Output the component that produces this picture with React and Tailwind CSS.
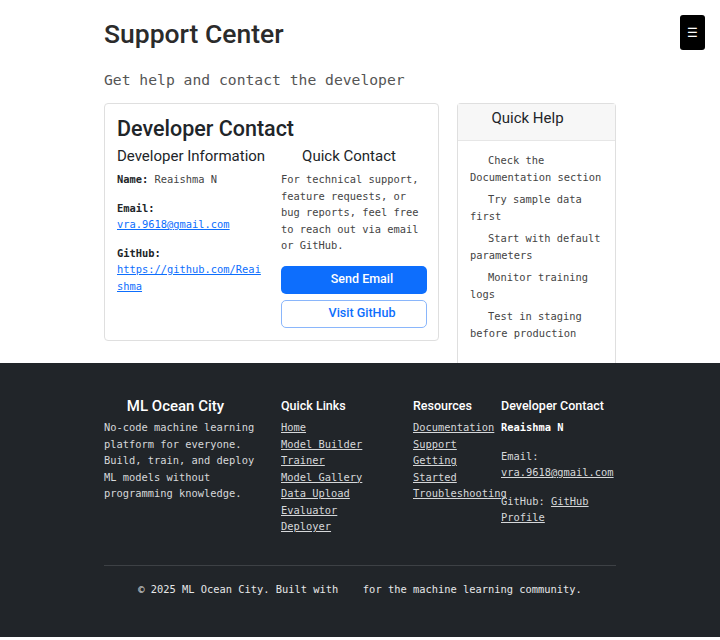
const mono = { fontFamily: '"DejaVu Sans Mono", "Liberation Mono", monospace' };
const sans = { fontFamily: 'Roboto, "Noto Sans", Arial, sans-serif' };

const quickHelp = [
  'Check the Documentation section',
  'Try sample data first',
  'Start with default parameters',
  'Monitor training logs',
  'Test in staging before production',
];

const quickLinks = ['Home', 'Model Builder', 'Trainer', 'Model Gallery', 'Data Upload', 'Evaluator', 'Deployer'];
const resources = ['Documentation', 'Support', 'Getting Started', 'Troubleshooting'];

function FooterHeading({ children }) {
  return (
    <h5 className="mb-[4px] text-[12.5px] font-medium leading-[18px] text-white" style={sans}>
      {children}
    </h5>
  );
}

export default function App() {
  return (
    <div className="min-h-[640px] bg-white text-[#212529]">
      <button className="fixed right-[15px] top-[15px] flex h-[35px] w-[25px] items-center justify-center rounded-[3px] bg-black text-[12px] text-white">
        ☰
      </button>

      <main className="mx-auto w-[512px] pt-[17px]">
        <h1 className="text-[26.5px] font-medium leading-[34px] text-[#2b2b2b]" style={sans}>Support Center</h1>
        <p className="mt-[20px] text-[14.7px] leading-[18px] text-[#555]" style={mono}>
          Get help and contact the developer
        </p>

        <div className="mt-[14px] flex items-start gap-[18px]">
          <section className="w-[335px] rounded-[4px] border border-[#dfdfdf] px-[12px] py-[12px]">
            <h2 className="text-[21.5px] font-medium leading-[26px] text-[#212529]" style={sans}>Developer Contact</h2>
            <div className="mt-[5px] grid grid-cols-[152px_146px] gap-[12px]">
              <div>
                <h3 className="mb-[6px] text-[15px] leading-[18px]" style={sans}>Developer Information</h3>
                <div className="text-[10.4px] leading-[16.5px] text-[#444]" style={mono}>
                  <p><strong className="text-[#212529]">Name:</strong> Reaishma N</p>
                  <p className="mt-[12px]"><strong className="text-[#212529]">Email:</strong></p>
                  <a className="text-[#0d6efd] underline">vra.9618@gmail.com</a>
                  <p className="mt-[12px]"><strong className="text-[#212529]">GitHub:</strong></p>
                  <a className="block w-[146px] break-all text-[#0d6efd] underline">https://github.com/Reaishma</a>
                </div>
              </div>
              <div>
                <h3 className="mb-[6px] pr-[10px] text-center text-[15px] leading-[18px]" style={sans}>Quick Contact</h3>
                <p className="text-[10.4px] leading-[16.5px] text-[#444]" style={mono}>
                  For technical support, feature requests, or bug reports, feel free to reach out via email or GitHub.
                </p>
                <div className="mt-[12px] flex flex-col gap-[6px]" style={sans}>
                  <button className="flex h-[28px] items-center justify-center rounded-[5px] bg-[#0d6efd] text-[12.5px] font-medium text-white">
                    <span className="inline-block w-[16px]" />Send Email
                  </button>
                  <button className="flex h-[28px] items-center justify-center rounded-[5px] border border-[#8ab6fb] text-[12.5px] font-medium text-[#0d6efd]">
                    <span className="inline-block w-[16px]" />Visit GitHub
                  </button>
                </div>
              </div>
            </div>
          </section>

          <aside className="w-[159px] rounded-t-[4px] border border-b-0 border-[#dfdfdf]">
            <div className="flex h-[37px] justify-center border-b border-[#e6e6e6] bg-[#f7f7f7] pr-[18px] pt-[5px]">
              <h3 className="text-[15px] leading-[18px] text-[#212529]" style={sans}>Quick Help</h3>
            </div>
            <ul className="px-[12px] pb-[16px] pt-[11px] text-[10.4px] leading-[16.5px] text-[#444]" style={mono}>
              {quickHelp.map((item) => (
                <li key={item} className="mb-[6px] indent-[18px]">{item}</li>
              ))}
            </ul>
          </aside>
        </div>
      </main>

      <footer className="bg-[#212529] pb-[40px] pt-[34px] text-[#d6d8da]">
        <div className="mx-auto w-[512px]">
          <div className="grid grid-cols-[177px_132px_88px_115px]">
            <div className="pr-[20px]">
              <h4 className="mb-[4px] pr-[14px] text-center text-[15px] font-medium leading-[18px] text-white" style={sans}>
                ML Ocean City
              </h4>
              <p className="text-[10.4px] leading-[16.5px]" style={mono}>
                No-code machine learning platform for everyone. Build, train, and deploy ML models without programming knowledge.
              </p>
            </div>
            <div>
              <FooterHeading>Quick Links</FooterHeading>
              <ul className="text-[10.4px] leading-[16.5px]" style={mono}>
                {quickLinks.map((l) => (
                  <li key={l}><a className="underline">{l}</a></li>
                ))}
              </ul>
            </div>
            <div>
              <FooterHeading>Resources</FooterHeading>
              <ul className="text-[10.4px] leading-[16.5px]" style={mono}>
                {resources.map((l) => (
                  <li key={l} className="whitespace-nowrap">
                    {l === 'Getting Started' ? (
                      <a className="underline">Getting<br />Started</a>
                    ) : (
                      <a className="underline">{l}</a>
                    )}
                  </li>
                ))}
              </ul>
            </div>
            <div>
              <FooterHeading>Developer Contact</FooterHeading>
              <div className="text-[10.4px] leading-[16.5px]" style={mono}>
                <p className="font-bold text-white">Reaishma N</p>
                <p className="mt-[12px]">Email:</p>
                <a className="underline">vra.9618@gmail.com</a>
                <p className="mt-[12px]">GitHub: <a className="underline">GitHub Profile</a></p>
              </div>
            </div>
          </div>

          <hr className="mt-[30px] border-t border-[#3d4145]" />
          <p className="mt-[15px] text-center text-[10.4px] leading-[16.5px] text-[#e6e7e8]" style={mono}>
            © 2025 ML Ocean City. Built with <span className="inline-block w-[12px]" /> for the machine learning community.
          </p>
        </div>
      </footer>
    </div>
  );
}
